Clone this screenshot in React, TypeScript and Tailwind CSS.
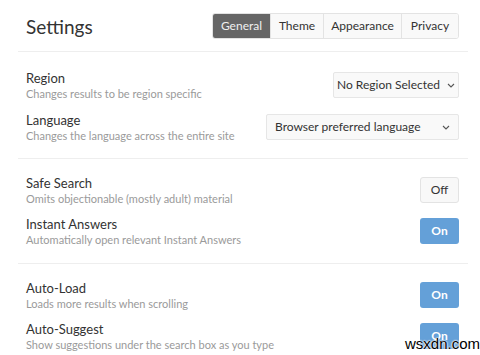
import React from "react";

const font = { fontFamily: '"Lato", "Open Sans", sans-serif' };

function Chevron() {
  return (
    <svg width="8" height="5" viewBox="0 0 8 5" className="ml-[7px] shrink-0">
      <path d="M1 1 L4 4 L7 1" fill="none" stroke="#555" strokeWidth="1.1" />
    </svg>
  );
}

function Row({ title, desc, children }: { title: string; desc: string; children: React.ReactNode }) {
  return (
    <div className="flex items-center justify-between h-[26px]">
      <div className="flex flex-col">
        <div className="text-[13px] leading-[16px] text-[#333]">{title}</div>
        <div className="text-[11px] leading-[14px] text-[#9a9a9a] mt-[1px]">{desc}</div>
      </div>
      {children}
    </div>
  );
}

function Toggle({ on }: { on: boolean }) {
  return on ? (
    <div className="w-[39px] h-[26px] rounded-[3px] bg-[#64a0d8] text-white text-[12px] font-bold flex items-center justify-center">On</div>
  ) : (
    <div className="w-[39px] h-[26px] rounded-[3px] bg-[#f8f8f8] border border-[#e3e3e3] text-[#333] text-[12px] flex items-center justify-center">Off</div>
  );
}

function Select({ label, width, justify }: { label: string; width: string; justify: string }) {
  return (
    <div className={`${width} h-[26px] rounded-[2px] bg-[#f9f9f9] border border-[#e6e6e6] text-[12px] text-[#333] whitespace-nowrap flex items-center ${justify} px-[8px]`}>
      <span>{label}</span>
      <Chevron />
    </div>
  );
}

export default function App() {
  const tabs = [
    { l: "General", w: "w-[57px]" },
    { l: "Theme", w: "w-[53px]" },
    { l: "Appearance", w: "w-[78px]" },
    { l: "Privacy", w: "w-[57px]" },
  ];
  return (
    <div className="w-[480px] h-[355px] bg-white overflow-hidden relative" style={font}>
      <div className="ml-[18px] w-[450px]">
        <div className="h-[52px] flex items-center justify-between pl-[8px] pr-[9px] border-b border-[#eeeeee]">
          <div className="text-[19px] text-[#333] leading-none mt-[1px]">Settings</div>
          <div className="flex h-[26px] rounded-[3px] border border-[#e3e3e3] overflow-hidden">
            {tabs.map((t, i) => (
              <div
                key={t.l}
                className={`${t.w} flex items-center justify-center text-[12px] ${
                  i === 0 ? "bg-[#666666] text-[#f0f0f0]" : "bg-[#f9f9f9] text-[#333] border-l border-[#e3e3e3]"
                }`}
              >
                {t.l}
              </div>
            ))}
          </div>
        </div>
        <div className="pl-[8px] pr-[9px] pt-[20px] pb-[18px] flex flex-col gap-[16px] border-b border-[#eeeeee]">
          <Row title="Region" desc="Changes results to be region specific">
            <Select label="No Region Selected" width="w-[126px]" justify="justify-center" />
          </Row>
          <Row title="Language" desc="Changes the language across the entire site">
            <Select label="Browser preferred language" width="w-[193px]" justify="justify-between" />
          </Row>
        </div>
        <div className="pl-[8px] pr-[9px] pt-[18px] pb-[19px] flex flex-col gap-[15px] border-b border-[#eeeeee]">
          <Row title="Safe Search" desc="Omits objectionable (mostly adult) material">
            <Toggle on={false} />
          </Row>
          <Row title="Instant Answers" desc="Automatically open relevant Instant Answers">
            <Toggle on={true} />
          </Row>
        </div>
        <div className="pl-[8px] pr-[9px] pt-[18px] flex flex-col gap-[15px]">
          <Row title="Auto-Load" desc="Loads more results when scrolling">
            <Toggle on={true} />
          </Row>
          <Row title="Auto-Suggest" desc="Show suggestions under the search box as you type">
            <Toggle on={true} />
          </Row>
        </div>
      </div>
      <div
        className="absolute left-[405px] top-[336px] text-[15px] text-black leading-none"
        style={{ fontFamily: '"Liberation Sans", sans-serif', textShadow: "0 0 2px #fff, 0 0 2px #fff, 0 0 2px #fff" }}
      >
        wsxdn.com
      </div>
    </div>
  );
}
